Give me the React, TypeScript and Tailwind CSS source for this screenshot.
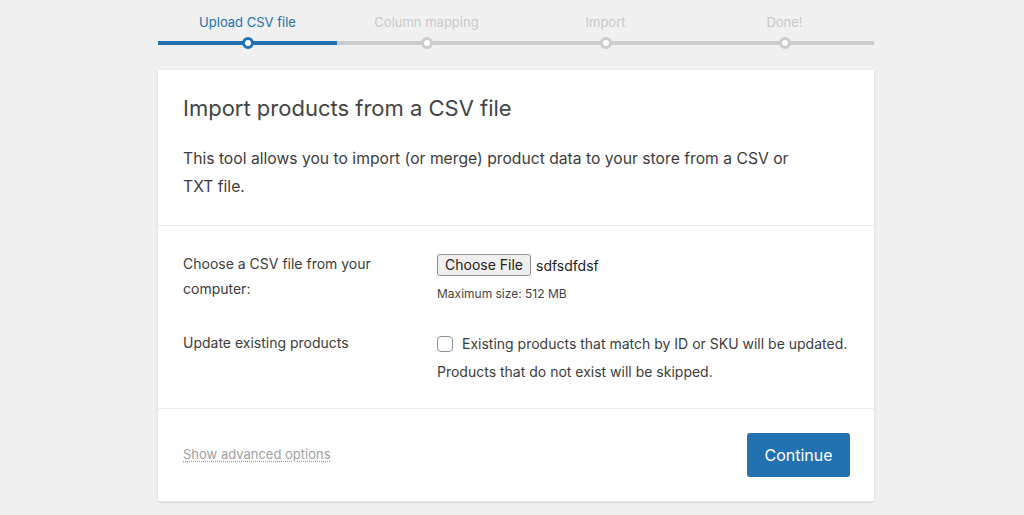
import React from 'react';

const steps = ['Upload CSV file', 'Column mapping', 'Import', 'Done!'];

const Stepper: React.FC<{ active: number }> = ({ active }) => (
  <div className="flex w-[716px] mx-auto">
    {steps.map((step, i) => {
      const done = i <= active;
      return (
        <div key={step} className="flex-1 flex flex-col items-center">
          <span
            className={`text-[13px] leading-[20px] pt-[12px] ${
              i === active ? 'text-[#2271b1]' : 'text-[#c9c9c9]'
            }`}
          >
            {step}
          </span>
          <div className="relative w-full h-[4px] mt-[9px]">
            <div className={`h-full w-full ${done ? 'bg-[#2271b1]' : 'bg-[#cccccc]'}`} />
            <div
              className={`absolute left-1/2 top-1/2 -translate-x-1/2 -translate-y-1/2 w-[12px] h-[12px] rounded-full bg-white border-[3px] ${
                done ? 'border-[#2271b1]' : 'border-[#cccccc]'
              }`}
            />
          </div>
        </div>
      );
    })}
  </div>
);

const App: React.FC = () => {
  return (
    <div
      className="min-h-[515px] bg-[#f0f0f0] text-[#3c3c3c] pl-[8px]"
      style={{ fontFamily: 'Inter, "Noto Sans", Arial, sans-serif' }}
    >
      <Stepper active={0} />

      <div className="w-[716px] mx-auto mt-[25px] bg-white shadow-[0_1px_3px_rgba(0,0,0,0.13)]">
        {/* Header */}
        <div className="px-[25px] pt-[23px] pb-[24px] border-b border-[#ececec]">
          <h1 className="text-[22px] leading-[30px] text-[#444] font-normal">
            Import products from a CSV file
          </h1>
          <p className="mt-[22px] text-[15.7px] leading-[28px] text-[#3c3c3c] max-w-[640px]">
            This tool allows you to import (or merge) product data to your store from a CSV or
            TXT file.
          </p>
        </div>

        {/* Form */}
        <div className="px-[25px] pt-[24px] pb-[22px] border-b border-[#ececec]">
          <div className="flex">
            <div className="w-[254px] text-[14px] leading-[25px] pt-[1px] text-[#3c3c3c]">
              Choose a CSV file from your
              <br />
              computer:
            </div>
            <div className="flex flex-col pt-[4px]">
              <div className="flex items-center gap-[5px]">
                <button className="h-[22px] px-[7px] text-[14px] leading-[20px] text-[#222] bg-[#efefef] border border-[#8f8f8f] rounded-[3px]">
                  Choose File
                </button>
                <span className="text-[14px] text-[#222]">sdfsdfdsf</span>
              </div>
              <span className="mt-[11px] text-[12px] leading-[14px] text-[#444]">
                Maximum size: 512 MB
              </span>
            </div>
          </div>

          <div className="flex mt-[29px]">
            <div className="w-[254px] text-[14px] leading-[25px] text-[#3c3c3c]">
              Update existing products
            </div>
            <div className="flex flex-col text-[14px] leading-[28px] text-[#3c3c3c]">
              <div className="flex items-center gap-[9px] h-[28px]">
                <span className="w-[16px] h-[16px] rounded-[4px] border border-[#8c8f94] bg-white" />
                <span>Existing products that match by ID or SKU will be updated.</span>
              </div>
              <span>Products that do not exist will be skipped.</span>
            </div>
          </div>
        </div>

        {/* Footer */}
        <div className="pl-[25px] pr-[24px] h-[92px] flex items-center justify-between">
          <a className="text-[13px] text-[#a0a0a0] underline decoration-dotted underline-offset-2">
            Show advanced options
          </a>
          <button className="w-[103px] h-[44px] rounded-[3px] bg-[#2271b1] text-white text-[16px]">
            Continue
          </button>
        </div>
      </div>
    </div>
  );
};

export default App;
